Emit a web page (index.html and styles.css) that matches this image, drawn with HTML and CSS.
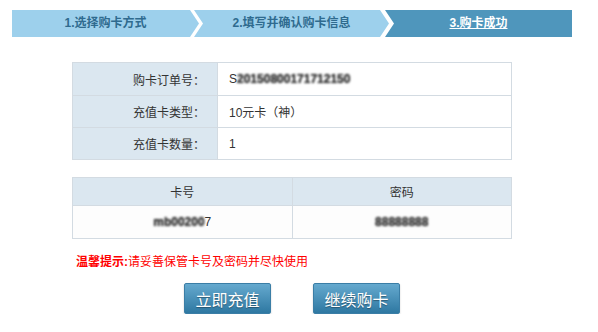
FILE: index.html
```html
<!DOCTYPE html>
<html>
<head>
    <title>购卡成功</title>
    <link rel="stylesheet" href="styles.css">
</head>
<body>
    <div class="steps">
        <div class="step step-first">1.选择购卡方式</div>
        <div class="step step-mid">2.填写并确认购卡信息</div>
        <div class="step step-last"><a href="#">3.购卡成功</a></div>
    </div>

    <div class="content">
        <table class="info">
            <tr>
                <th>购卡订单号：</th>
                <td>S<span class="masked">20150800171712150</span></td>
            </tr>
            <tr>
                <th>充值卡类型：</th>
                <td>10元卡（神）</td>
            </tr>
            <tr>
                <th>充值卡数量：</th>
                <td>1</td>
            </tr>
        </table>

        <table class="cards">
            <tr>
                <th>卡号</th>
                <th>密码</th>
            </tr>
            <tr>
                <td><span class="masked">mb00200</span>7</td>
                <td><span class="masked">88888888</span></td>
            </tr>
        </table>

        <p class="tip"><b>温馨提示:</b>请妥善保管卡号及密码并尽快使用</p>

        <div class="actions">
            <button type="button" class="btn">立即充值</button>
            <button type="button" class="btn">继续购卡</button>
        </div>
    </div>
</body>
</html>
```

FILE: styles.css
```css
body { margin: 0; background: #fff; font-family: "Liberation Sans", "Noto Sans CJK SC", sans-serif; font-size: 12px; color: #333; }

.steps { display: flex; margin: 10px 0 0 12px; height: 27px; }
.step { height: 27px; line-height: 27px; text-align: center; font-weight: bold; background: #9dd0ec; color: #2f6b8f; }
.step-first { width: 187px; clip-path: polygon(0 0, 178px 0, 187px 50%, 178px 100%, 0 100%); }
.step-mid { width: 195px; margin-left: -5px; clip-path: polygon(0 0, 186px 0, 195px 50%, 186px 100%, 0 100%, 9px 50%); }
.step-last { width: 187px; margin-left: -4px; background: #4f96bc; clip-path: polygon(0 0, 100% 0, 100% 100%, 0 100%, 9px 50%); }
.step-last a { color: #fff; text-decoration: underline; }

.content { width: 440px; margin: 25px 0 0 72px; }

table { width: 100%; border-collapse: collapse; }
th, td { border: 1px solid #d3dbe2; font-weight: normal; padding-top: 0; padding-bottom: 0; }

.info th { width: 131px; height: 31px; padding-right: 12px; text-align: right; background: #dbe7f0; }
.info td { padding-left: 11px; background: #fff; }
.info tr:first-child th, .info tr:first-child td { height: 32px; }

.cards { margin-top: 17px; }
.cards th, .cards td { width: 50%; text-align: center; }
.cards th { height: 27px; background: #dbe7f0; }
.cards td { height: 32px; background: #fdfdfd; }

.masked { color: #333; font-weight: bold; filter: blur(0.9px); text-shadow: 0 0 1px #333; }

.tip { margin: 16px 0 0 4px; color: #f00; line-height: 14px; }
.tip b { font-weight: bold; }

.actions { display: flex; justify-content: center; gap: 42px; margin-top: 14px; }
.btn { width: 87px; height: 31px; padding: 0; border: 1px solid #3b7ea6; border-radius: 2px;
       background: linear-gradient(#65a9ce, #2e78a2); color: #fff; font-family: inherit; font-size: 16px;
       text-shadow: 0 1px 1px rgba(0,0,0,0.35); box-shadow: 0 1px 2px rgba(0,0,0,0.2); cursor: pointer; }
```
